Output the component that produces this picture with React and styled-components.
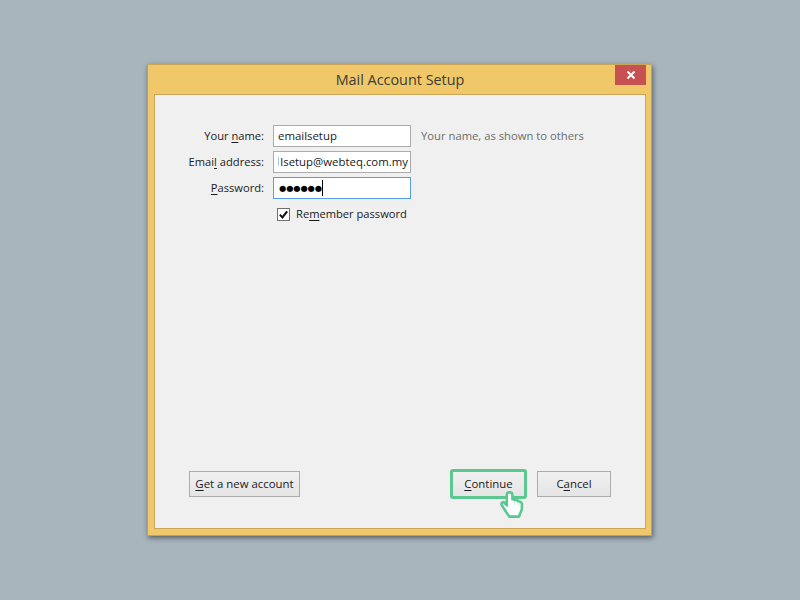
import React from "react";
import styled, { createGlobalStyle } from "styled-components";

const Global = createGlobalStyle`
  html, body { margin: 0; padding: 0; }
  body { background: #a9b5bc; font-family: "Open Sans", "Noto Sans", sans-serif; }
`;

const Page = styled.div`
  width: 800px;
  height: 600px;
  box-sizing: border-box;
  padding: 64px 0 0 147px;
`;

const Window = styled.div`
  width: 505px;
  height: 472px;
  box-sizing: border-box;
  background: #f0c869;
  border: 1px solid #c2a052;
  border-top-color: #c9a658;
  box-shadow: 1px 2px 5px rgba(40, 50, 55, 0.65);
  display: flex;
  flex-direction: column;
  padding: 0 5px 6px 6px;
`;

const TitleBar = styled.div`
  height: 29px;
  display: grid;
  grid-template-columns: 1fr auto 1fr;
  align-items: start;
  flex: none;
`;

const Title = styled.div`
  grid-column: 2;
  font-size: 14.4px;
  line-height: 30px;
  color: #3c3c34;
`;

const CloseButton = styled.div`
  grid-column: 3;
  justify-self: end;
  width: 31px;
  height: 20px;
  background: #c75050;
  display: flex;
  align-items: center;
  justify-content: center;
`;

const Panel = styled.div`
  flex: 1;
  background: #f0f0f0;
  border: 1px solid #c9a658;
  display: flex;
  flex-direction: column;
  padding: 30px 34px 29px 34px;
`;

const Form = styled.div`
  display: grid;
  grid-template-columns: 75px 138px auto;
  grid-auto-rows: 22px;
  column-gap: 9px;
  row-gap: 4px;
  align-items: center;
`;

const Label = styled.label`
  font-size: 11.15px;
  color: #1a1a1a;
  text-align: right;
  white-space: nowrap;
  justify-self: end;
  padding-bottom: 1px;
`;

const U = styled.span`
  text-decoration: underline;
  text-underline-offset: 2px;
`;

const Field = styled.div`
  height: 22px;
  box-sizing: border-box;
  background: #fff;
  border: 1px solid ${(p) => (p.$focused ? "#569de5" : "#ababab")};
  font-size: 11.4px;
  color: #1a1a1a;
  padding: 0 2px 1px 4px;
  white-space: nowrap;
  overflow: hidden;
  display: flex;
  align-items: center;
  justify-content: ${(p) => (p.$end ? "flex-end" : "flex-start")};
`;

const ClippedGlyph = styled.span`
  width: 1px;
  height: 9px;
  background: #a9cbe4;
  margin-right: auto;
`;

const Hint = styled.span`
  font-size: 11.25px;
  color: #6d6d6d;
  white-space: nowrap;
  margin-left: 1px;
  padding-bottom: 1px;
`;

const Dots = styled.span`
  font-size: 8.2px;
  font-family: "DejaVu Sans", sans-serif;
  color: #000;
  margin-left: 1px;
`;

const Caret = styled.span`
  width: 1px;
  height: 16px;
  background: #000;
`;

const CheckRow = styled.div`
  grid-column: 2 / 4;
  display: flex;
  align-items: center;
  gap: 6px;
  padding-left: 4px;
`;

const Checkbox = styled.span`
  width: 13px;
  height: 13px;
  box-sizing: border-box;
  border: 1px solid #707070;
  background: #fff;
  display: flex;
  align-items: center;
  justify-content: center;
`;

const CheckLabel = styled.span`
  font-size: 11.15px;
  color: #1a1a1a;
  padding-bottom: 1px;
`;

const Actions = styled.div`
  margin-top: auto;
  display: flex;
  align-items: center;
`;

const Button = styled.div`
  height: 26px;
  width: ${(p) => p.$w}px;
  box-sizing: border-box;
  border: 1px solid #acacac;
  background: linear-gradient(#f0f0f0, #e5e5e5);
  font-size: 11.4px;
  color: #1a1a1a;
  padding-bottom: 2px;
  display: flex;
  align-items: center;
  justify-content: center;
  white-space: nowrap;
`;

const Highlight = styled.div`
  position: relative;
  margin-left: auto;
  margin-right: 10px;
  border: 3px solid #5ac88f;
  border-radius: 3px;
  box-sizing: border-box;
  width: 77px;
  height: 30px;
  display: flex;
`;

const InnerButton = styled(Button)`
  width: 100%;
  height: 100%;
  border: none;
`;

const Pointer = styled.svg`
  position: absolute;
  left: 47px;
  top: 19px;
`;

export default function App() {
  return (
    <>
      <Global />
      <Page>
        <Window>
          <TitleBar>
            <Title>Mail Account Setup</Title>
            <CloseButton>
              <svg width="10" height="10" viewBox="0 0 10 10">
                <path d="M1.5 1.5 L8.5 8.5 M8.5 1.5 L1.5 8.5" stroke="#fff" strokeWidth="2" />
              </svg>
            </CloseButton>
          </TitleBar>
          <Panel>
            <Form>
              <Label>
                Your <U>n</U>ame:
              </Label>
              <Field>emailsetup</Field>
              <Hint>Your name, as shown to others</Hint>

              <Label>
                Emai<U>l</U> address:
              </Label>
              <Field $end>
                <ClippedGlyph />
                lsetup@webteq.com.my
              </Field>
              <span />

              <Label>
                <U>P</U>assword:
              </Label>
              <Field $focused>
                <Dots>●●●●●●</Dots>
                <Caret />
              </Field>
              <span />

              <CheckRow>
                <Checkbox>
                  <svg width="11" height="11" viewBox="0 0 12 12">
                    <path d="M2 6.2 L4.8 9.2 L10 2.5" fill="none" stroke="#111" strokeWidth="2.2" />
                  </svg>
                </Checkbox>
                <CheckLabel>
                  Re<U>m</U>ember password
                </CheckLabel>
              </CheckRow>
            </Form>
            <Actions>
              <Button $w={111}>
                <span>
                  <U>G</U>et a new account
                </span>
              </Button>
              <Highlight>
                <InnerButton>
                  <span>
                    <U>C</U>ontinue
                  </span>
                </InnerButton>
                <Pointer width="24" height="27" viewBox="0 0 24 27">
                  <path
                    d="M9.5 1.2 C7.8 1.2 6.8 2.4 6.8 4 L6.8 14.5 L4.5 11.8 C3 10.4 0.6 12 1.8 14.2 L6 20.8 L9.3 25.6 L19 25.6 L21.8 18.5 L22 12.8 C21.4 10.8 19.6 10.2 18.4 10.6 C17.6 9 15.6 8.6 14.8 9.2 C14.2 8.2 13.2 8 12.4 8.2 L12.4 4 C12.4 2.4 11.2 1.2 9.5 1.2 Z"
                    fill="#fff"
                    stroke="#5ac88f"
                    strokeWidth="2.6"
                    strokeLinejoin="round"
                  />
                  <path d="M14.8 10 V14 M18.2 11 V14.5" stroke="#bfe9d2" strokeWidth="1" />
                </Pointer>
              </Highlight>
              <Button $w={74}>
                <span>
                  C<U>a</U>ncel
                </span>
              </Button>
            </Actions>
          </Panel>
        </Window>
      </Page>
    </>
  );
}
